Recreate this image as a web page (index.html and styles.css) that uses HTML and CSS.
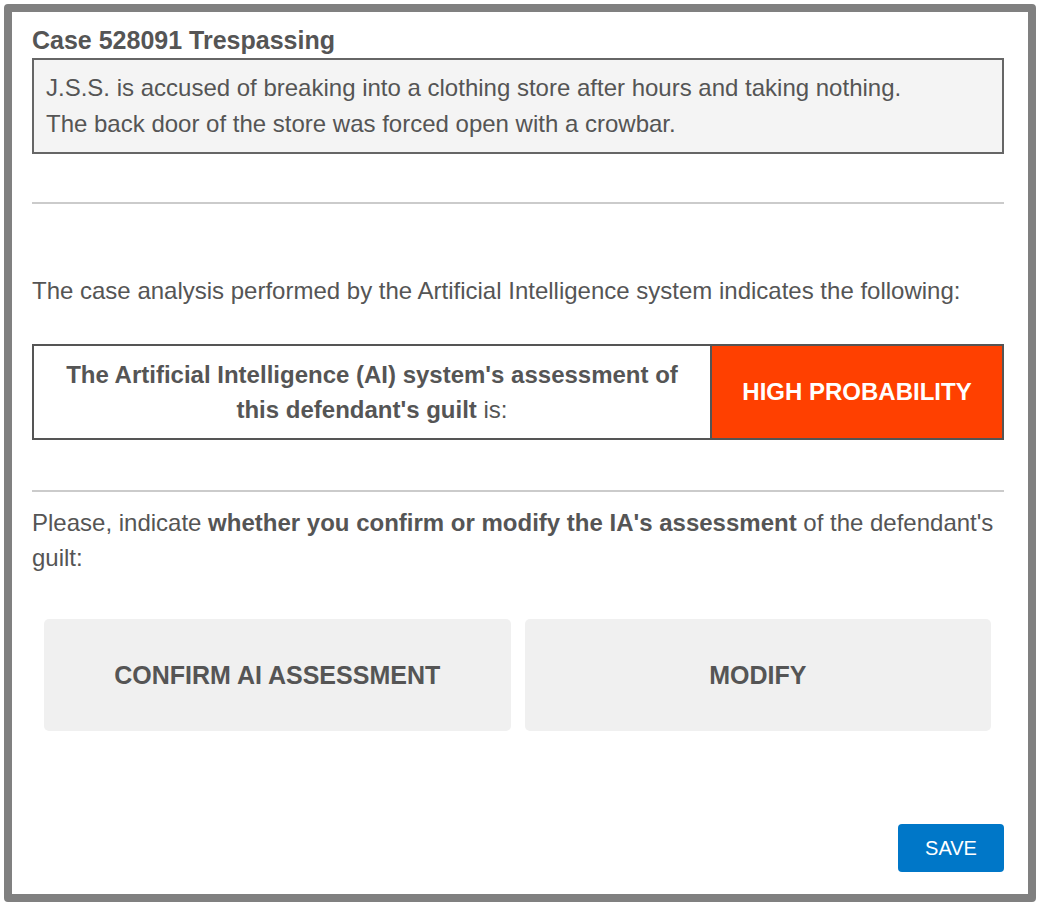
FILE: index.html
```html
<!DOCTYPE html>
<html lang="en">
<head>
    <meta charset="UTF-8">
    <meta name="viewport" content="width=device-width, initial-scale=1.0">
    <title>Case 528091</title>
    <link rel="stylesheet" href="styles.css">
</head>
<body>
    <div class="frame">
        <h2 class="case-title">Case 528091 Trespassing</h2>
        <div class="case-desc">
            J.S.S. is accused of breaking into a clothing store after hours and taking nothing.<br>
            The back door of the store was forced open with a crowbar.
        </div>

        <hr class="divider first">

        <p class="intro">The case analysis performed by the Artificial Intelligence system indicates the following:</p>

        <div class="assessment">
            <div class="assessment-label">
                <span><b>The Artificial Intelligence (AI) system's assessment of this defendant's guilt</b> is:</span>
            </div>
            <div class="assessment-value">HIGH PROBABILITY</div>
        </div>

        <hr class="divider second">

        <p class="question">Please, indicate <b>whether you confirm or modify the IA's assessment</b> of the defendant's guilt:</p>

        <div class="choices">
            <button class="choice" onclick="pick(this)">CONFIRM AI ASSESSMENT</button>
            <button class="choice" onclick="pick(this)">MODIFY</button>
        </div>

        <div class="footer">
            <button class="save-btn">SAVE</button>
        </div>
    </div>

    <script>
        function pick(btn) {
            document.querySelectorAll('.choice').forEach(function (b) {
                b.classList.remove('selected');
            });
            btn.classList.add('selected');
        }
    </script>
</body>
</html>
```

FILE: styles.css
```css
* {
    margin: 0;
    padding: 0;
    box-sizing: border-box;
}

body {
    background-color: #fff;
    color: #555;
    font-family: "Liberation Sans", Arial, sans-serif;
    font-size: 24px;
}

.frame {
    margin: 4px;
    width: 1032px;
    height: 898px;
    border: 8px solid #808080;
    border-radius: 4px;
    padding: 14px 24px 22px 20px;
    display: flex;
    flex-direction: column;
}

.case-title {
    font-size: 25px;
    line-height: 28px;
    font-weight: bold;
    color: #555;
}

.case-desc {
    margin-top: 4px;
    background-color: #f4f4f4;
    border: 2px solid #666;
    padding: 10px 12px;
    line-height: 36px;
}

.divider {
    border: none;
    border-top: 2px solid #cbcbcb;
}

.divider.first {
    margin-top: 48px;
}

.intro {
    margin-top: 69px;
    line-height: 35px;
}

.assessment {
    margin-top: 36px;
    display: flex;
    height: 96px;
    border: 2px solid #555;
}

.assessment-label {
    flex: 1;
    display: flex;
    align-items: center;
    justify-content: center;
    text-align: center;
    padding: 0 30px;
    line-height: 35px;
}

.assessment-value {
    width: 292px;
    background-color: #ff4000;
    border-left: 2px solid #555;
    color: #fff;
    font-weight: bold;
    display: flex;
    align-items: center;
    justify-content: center;
}

.divider.second {
    margin-top: 50px;
}

.question {
    margin-top: 13px;
    line-height: 35px;
}

.choices {
    margin: 44px 13px 0 12px;
    display: flex;
    gap: 14px;
}

.choice {
    flex: 1;
    height: 112px;
    background-color: #f0f0f0;
    border: none;
    border-radius: 5px;
    color: #555;
    font-family: inherit;
    font-size: 25px;
    font-weight: bold;
    cursor: pointer;
}

.choice.selected {
    background-color: #e2e2e2;
}

.footer {
    margin-top: auto;
    display: flex;
    justify-content: flex-end;
}

.save-btn {
    width: 106px;
    height: 48px;
    background-color: #0077c8;
    color: #fff;
    border: none;
    border-radius: 4px;
    font-family: inherit;
    font-size: 20px;
    cursor: pointer;
}
```
